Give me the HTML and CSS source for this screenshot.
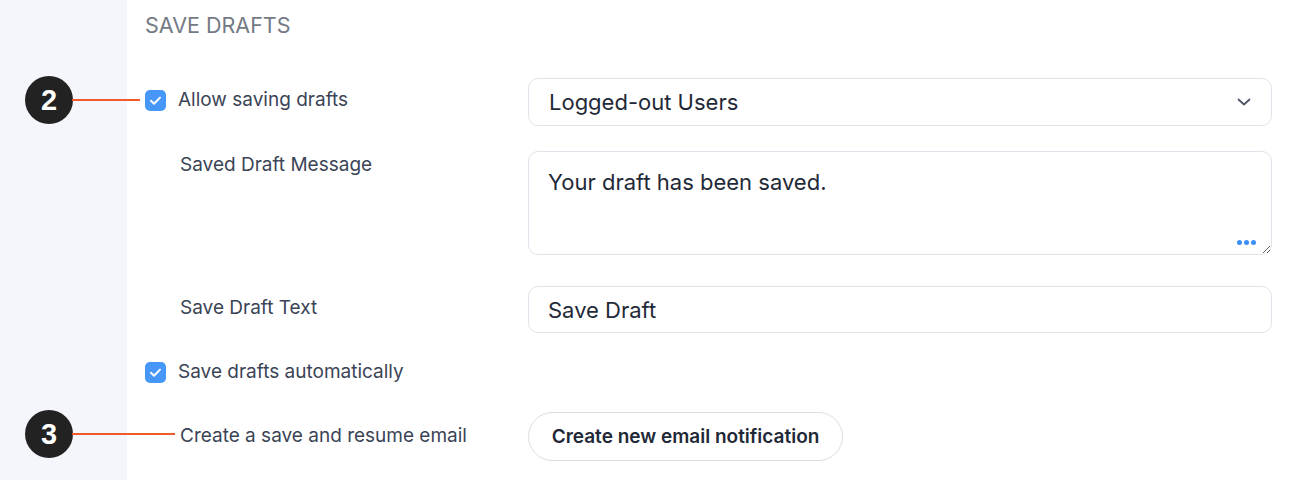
FILE: index.html
```html
<!DOCTYPE html>
<html>
<head>
<meta charset="utf-8">
<link rel="stylesheet" href="styles.css">
</head>
<body>
<div class="page">
  <aside class="sidebar"></aside>
  <main class="main">
    <h2 class="heading">SAVE DRAFTS</h2>

    <div class="row row-1">
      <div class="label-col check-label">
        <span class="checkbox"><svg viewBox="0 0 21 21" width="21" height="21"><path d="M6 10.8l3 3 6-6.2" fill="none" stroke="#fff" stroke-width="2" stroke-linecap="round" stroke-linejoin="round"/></svg></span>
        <span class="label-text">Allow saving drafts</span>
      </div>
      <div class="field select">
        <span>Logged-out Users</span>
        <svg class="chevron" viewBox="0 0 16 16" width="16" height="16"><path d="M2.5 5.5l5.5 5 5.5-5" fill="none" stroke="#4b5563" stroke-width="1.8" stroke-linecap="round" stroke-linejoin="round"/></svg>
      </div>
    </div>

    <div class="row row-2">
      <div class="label-col plain-label">Saved Draft Message</div>
      <div class="field textarea-wrap">
        <textarea class="textarea">Your draft has been saved.</textarea>
        <span class="dots"><i></i><i></i><i></i></span>
      </div>
    </div>

    <div class="row row-3">
      <div class="label-col plain-label">Save Draft Text</div>
      <input class="field input" type="text" value="Save Draft">
    </div>

    <div class="row row-4">
      <div class="label-col check-label">
        <span class="checkbox"><svg viewBox="0 0 21 21" width="21" height="21"><path d="M6 10.8l3 3 6-6.2" fill="none" stroke="#fff" stroke-width="2" stroke-linecap="round" stroke-linejoin="round"/></svg></span>
        <span class="label-text">Save drafts automatically</span>
      </div>
    </div>

    <div class="row row-5">
      <div class="label-col plain-label">Create a save and resume email</div>
      <button class="btn">Create new email notification</button>
    </div>
  </main>

  <div class="badge badge-2">2</div>
  <div class="leader leader-2"></div>
  <div class="badge badge-3">3</div>
  <div class="leader leader-3"></div>
</div>
</body>
</html>
```

FILE: styles.css
```css
* { box-sizing: border-box; }
html, body { margin: 0; padding: 0; }
body {
  font-family: Inter, "Noto Sans", sans-serif;
  background: #ffffff;
  color: #374151;
}
.page {
  position: relative;
  display: flex;
  width: 1300px;
  height: 480px;
  overflow: hidden;
}
.sidebar {
  width: 127px;
  flex: none;
  background: #f5f6fb;
}
.main {
  flex: 1;
  padding: 12px 28px 0 18px;
}
.heading {
  margin: 0;
  font-size: 21.5px;
  line-height: 26px;
  font-weight: 400;
  color: #737a84;
}
.row {
  display: flex;
  align-items: flex-start;
}
.label-col {
  width: 383px;
  flex: none;
  font-size: 19px;
  line-height: 24px;
  color: #3b4456;
}
.check-label {
  display: flex;
  align-items: center;
  gap: 12px;
}
.plain-label {
  padding-left: 35px;
}
.checkbox {
  width: 21px;
  height: 21px;
  border-radius: 5px;
  background: #4697f8;
  display: flex;
  flex: none;
}
.field {
  width: 744px;
  flex: none;
  border: 1px solid #e2e3ea;
  border-radius: 10px;
  background: #fff;
  color: #1f2937;
  font-family: Inter, "Noto Sans", sans-serif;
  font-size: 22px;
}
.row-1 { margin-top: 40px; }
.row-1 .label-col { padding-top: 10px; }
.select {
  height: 48px;
  display: flex;
  align-items: center;
  justify-content: space-between;
  padding: 0 19px 0 20px;
}
.row-2 { margin-top: 25px; }
.row-2 .label-col { padding-top: 2px; }
.textarea-wrap {
  position: relative;
  height: 104px;
  border: none;
  border-radius: 10px;
}
.textarea {
  display: block;
  width: 100%;
  height: 104px;
  border: 1px solid #e2e3ea;
  border-radius: 10px;
  padding: 15px 19px;
  font-family: Inter, "Noto Sans", sans-serif;
  font-size: 22px;
  line-height: 30px;
  color: #1f2937;
  resize: vertical;
  outline: none;
  background: #fff;
}
.dots {
  position: absolute;
  right: 16px;
  bottom: 10px;
  display: flex;
  gap: 2px;
}
.dots i {
  width: 5px;
  height: 5px;
  border-radius: 50%;
  background: #3d8ef7;
  display: block;
}
.row-3 { margin-top: 31px; }
.row-3 .label-col { padding-top: 10px; }
.input {
  height: 47px;
  padding: 0 19px;
  outline: none;
}
.row-4 { margin-top: 27px; }
.row-5 { margin-top: 28px; }
.row-5 .label-col { padding-top: 12px; }
.btn {
  height: 49px;
  padding: 0 20px;
  border: 1px solid #dcdde4;
  border-radius: 25px;
  background: #fff;
  font-family: Inter, "Noto Sans", sans-serif;
  font-size: 19px;
  font-weight: 600;
  color: #1f2937;
  width: 315px;
  white-space: nowrap;
}
.badge {
  position: absolute;
  left: 25px;
  width: 48px;
  height: 48px;
  border-radius: 50%;
  background: #222222;
  color: #fff;
  font-family: "Liberation Sans", Arial, sans-serif;
  font-weight: 700;
  font-size: 29px;
  display: flex;
  align-items: center;
  justify-content: center;
}
.badge-2 { top: 76px; }
.badge-3 { top: 410px; }
.leader {
  position: absolute;
  left: 72px;
  height: 2px;
  background: #f05a2a;
}
.leader-2 { top: 99px; width: 68px; }
.leader-3 { top: 433px; width: 103px; }
```
